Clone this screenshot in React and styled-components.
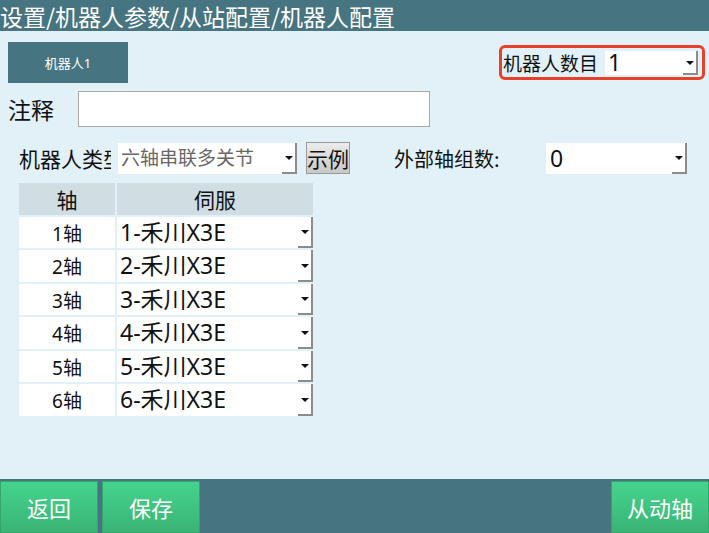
import styled, { createGlobalStyle } from "styled-components";

const GlobalStyle = createGlobalStyle`
  html, body {
    margin: 0;
    padding: 0;
  }
  body {
    font-family: "Noto Sans", "Noto Sans CJK SC", sans-serif;
    background: #e2f1f7;
  }
`;

const Page = styled.div`
  width: 709px;
  height: 533px;
  display: flex;
  flex-direction: column;
  background: #e2f1f7;
  overflow: hidden;
`;

const TitleBar = styled.div`
  height: 31px;
  flex: none;
  background: #477481;
  color: #fff;
  font-family: "Noto Sans CJK SC", sans-serif;
  font-size: 23px;
  line-height: 32px;
  white-space: nowrap;
`;

const Main = styled.div`
  flex: 1;
  display: flex;
  flex-direction: column;
`;

const TopRow = styled.div`
  display: flex;
  justify-content: space-between;
  align-items: flex-start;
  padding: 11px 4px 0 8px;
`;

const Tab = styled.div`
  width: 120px;
  height: 41px;
  background: #477481;
  color: #fff;
  font-size: 13px;
  display: flex;
  align-items: center;
  justify-content: center;
`;

const CountBox = styled.div`
  margin-top: 3px;
  width: 206px;
  height: 35px;
  border: 3px solid #e8412a;
  border-radius: 6px;
  display: flex;
  align-items: center;
  gap: 2px;
  padding-left: 1px;
  box-sizing: border-box;
`;

const Label = styled.div`
  font-family: "Noto Sans CJK SC", sans-serif;
  font-size: ${(p) => p.size || 19}px;
  color: #111;
  white-space: nowrap;
  overflow: hidden;
  width: ${(p) => (p.w ? `${p.w}px` : "auto")};
  flex: none;
`;

const NoteRow = styled.div`
  display: flex;
  align-items: center;
  padding: 8px 0 0 8px;
  gap: 24px;
`;

const NoteInput = styled.div`
  width: 350px;
  height: 34px;
  background: #fff;
  border: 1px solid #a9a9a9;
`;

const TypeRow = styled.div`
  display: flex;
  align-items: center;
  padding: 15px 0 0 19px;
  height: 32px;
`;

const SelectBox = styled.div`
  width: ${(p) => p.w}px;
  height: ${(p) => p.h}px;
  margin-left: ${(p) => p.ml || 0}px;
  background: #fff;
  display: flex;
  align-items: stretch;
  flex: none;
`;

const SelectValue = styled.div`
  flex: 1;
  font-size: ${(p) => p.size}px;
  line-height: 1.2;
  color: ${(p) => p.color || "#111"};
  padding-left: ${(p) => p.pad ?? 3}px;
  padding-top: 1px;
  display: flex;
  align-items: center;
  white-space: nowrap;
`;

// dropdown button: black caret with a grey right/bottom bevel
const ArrowBtn = styled.div`
  width: 13px;
  border-right: 2px solid #8c8c8c;
  border-bottom: 2px solid #8c8c8c;
  display: flex;
  align-items: center;
  justify-content: center;
  &::after {
    content: "";
    border-left: 4px solid transparent;
    border-right: 4px solid transparent;
    border-top: 4px solid #111;
    margin-top: 2px;
  }
`;

const Select = ({ value, w, h, ml, size = 22, color, pad }) => (
  <SelectBox w={w} h={h} ml={ml}>
    <SelectValue size={size} color={color} pad={pad}>
      {value}
    </SelectValue>
    <ArrowBtn />
  </SelectBox>
);

const DemoButton = styled.div`
  margin-left: 9px;
  width: 44px;
  height: 32px;
  box-sizing: border-box;
  border: 1px solid #9a9a9a;
  background: linear-gradient(#ececec, #c8c8c8);
  font-family: "Noto Sans CJK SC", sans-serif;
  font-size: 21px;
  color: #111;
  display: flex;
  align-items: center;
  justify-content: center;
  line-height: 1;
`;

const ExtLabel = styled(Label)`
  margin-left: 44px;
`;

const Table = styled.div`
  margin: 9px 0 0 19px;
  display: grid;
  grid-template-columns: 96px 196px;
  grid-auto-rows: 31.5px;
  gap: 2px;
  width: 294px;
`;

const HeadCell = styled.div`
  background: #d0dee3;
  font-family: "Noto Sans CJK SC", sans-serif;
  font-size: 21px;
  color: #111;
  display: flex;
  align-items: center;
  justify-content: center;
`;

const AxisCell = styled.div`
  background: #fff;
  font-size: 19px;
  padding-top: 1px;
  color: #111;
  display: flex;
  align-items: center;
  justify-content: center;
`;

const Footer = styled.div`
  height: 54px;
  flex: none;
  background: #477481;
  display: flex;
  align-items: flex-end;
  gap: 4px;
`;

const FootButton = styled.div`
  width: 98px;
  height: 52px;
  box-sizing: border-box;
  border: 1px solid #35a56a;
  background: linear-gradient(#45d48d, #39b475);
  color: #fff;
  font-family: "Noto Sans CJK SC", sans-serif;
  font-size: 22px;
  display: flex;
  align-items: center;
  justify-content: center;
  margin-left: ${(p) => (p.right ? "auto" : "0")};
`;

const axes = [1, 2, 3, 4, 5, 6];

export default function App() {
  return (
    <Page>
      <GlobalStyle />
      <TitleBar>设置/机器人参数/从站配置/机器人配置</TitleBar>
      <Main>
        <TopRow>
          <Tab>机器人1</Tab>
          <CountBox>
            <Label size={19} w={100}>
              机器人数目
            </Label>
            <Select value="1" w={93} h={24} size={23} />
          </CountBox>
        </TopRow>
        <NoteRow>
          <Label size={23}>注释</Label>
          <NoteInput />
        </NoteRow>
        <TypeRow>
          <Label size={21} w={92}>
            机器人类型
          </Label>
          <Select value="六轴串联多关节" w={179} h={31} ml={7} size={19} color="#666" />
          <DemoButton>示例</DemoButton>
          <ExtLabel size={20} w={108}>
            外部轴组数:
          </ExtLabel>
          <Select value="0" w={141} h={31} ml={44} size={23} pad={4} />
        </TypeRow>
        <Table>
          <HeadCell>轴</HeadCell>
          <HeadCell>伺服</HeadCell>
          {axes.map((n) => [
            <AxisCell key={`a${n}`}>{n}轴</AxisCell>,
            <Select key={`s${n}`} value={`${n}-禾川X3E`} w={196} h={31.5} size={23} />,
          ])}
        </Table>
      </Main>
      <Footer>
        <FootButton>返回</FootButton>
        <FootButton>保存</FootButton>
        <FootButton right>从动轴</FootButton>
      </Footer>
    </Page>
  );
}
